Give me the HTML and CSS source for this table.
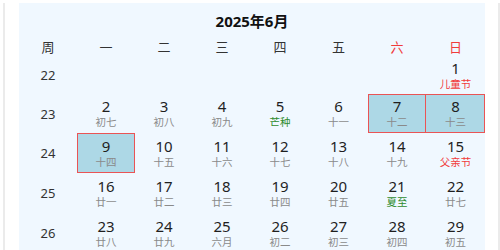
FILE: index.html
```html
<!DOCTYPE html>
<html lang="zh-CN">
<head>
<meta charset="utf-8">
<title>2025年6月</title>
<link rel="stylesheet" href="styles.css">
</head>
<body>
<div class="frame">
  <div class="calendar">
    <div class="cal-title">2025年6月</div>
    <table class="cal-grid">
      <colgroup>
        <col class="c-wk"><col class="c-day"><col class="c-day"><col class="c-day"><col class="c-day"><col class="c-wide"><col class="c-day"><col class="c-wide">
      </colgroup>
      <thead>
        <tr class="head-row">
          <th>周</th><th>一</th><th>二</th><th>三</th><th>四</th><th>五</th><th class="weekend">六</th><th class="weekend">日</th>
        </tr>
      </thead>
      <tbody>
        <tr class="week-short">
          <td class="wk">22</td>
          <td></td><td></td><td></td><td></td><td></td><td></td>
          <td><span class="num">1</span><span class="lunar fest">儿童节</span></td>
        </tr>
        <tr class="week-mid">
          <td class="wk">23</td>
          <td><span class="num">2</span><span class="lunar">初七</span></td>
          <td><span class="num">3</span><span class="lunar">初八</span></td>
          <td><span class="num">4</span><span class="lunar">初九</span></td>
          <td><span class="num">5</span><span class="lunar term">芒种</span></td>
          <td><span class="num">6</span><span class="lunar">十一</span></td>
          <td class="marked"><span class="num">7</span><span class="lunar">十二</span></td>
          <td class="marked joined"><span class="num">8</span><span class="lunar">十三</span></td>
        </tr>
        <tr>
          <td class="wk">24</td>
          <td class="marked"><span class="num">9</span><span class="lunar">十四</span></td>
          <td><span class="num">10</span><span class="lunar">十五</span></td>
          <td><span class="num">11</span><span class="lunar">十六</span></td>
          <td><span class="num">12</span><span class="lunar">十七</span></td>
          <td><span class="num">13</span><span class="lunar">十八</span></td>
          <td><span class="num">14</span><span class="lunar">十九</span></td>
          <td><span class="num">15</span><span class="lunar fest">父亲节</span></td>
        </tr>
        <tr>
          <td class="wk">25</td>
          <td><span class="num">16</span><span class="lunar">廿一</span></td>
          <td><span class="num">17</span><span class="lunar">廿二</span></td>
          <td><span class="num">18</span><span class="lunar">廿三</span></td>
          <td><span class="num">19</span><span class="lunar">廿四</span></td>
          <td><span class="num">20</span><span class="lunar">廿五</span></td>
          <td><span class="num">21</span><span class="lunar term">夏至</span></td>
          <td><span class="num">22</span><span class="lunar">廿七</span></td>
        </tr>
        <tr>
          <td class="wk">26</td>
          <td><span class="num">23</span><span class="lunar">廿八</span></td>
          <td><span class="num">24</span><span class="lunar">廿九</span></td>
          <td><span class="num">25</span><span class="lunar">六月</span></td>
          <td><span class="num">26</span><span class="lunar">初二</span></td>
          <td><span class="num">27</span><span class="lunar">初三</span></td>
          <td><span class="num">28</span><span class="lunar">初四</span></td>
          <td><span class="num">29</span><span class="lunar">初五</span></td>
        </tr>
      </tbody>
    </table>
  </div>
</div>
</body>
</html>
```

FILE: styles.css
```css
html, body {
  margin: 0;
  padding: 0;
  height: 100%;
  overflow: hidden;
  background: #ffffff;
}

body {
  font-family: "Noto Sans", "Noto Sans CJK SC", sans-serif;
  color: #222222;
}

.frame {
  margin-left: 3px;
  min-height: 100%;
  border-left: 2px solid #ebebeb;
  border-right: 2px solid #ebebeb;
}

.calendar {
  margin: 3px 0 0 14px;
  width: 466px;
  background: #f0f8ff;
  padding-top: 8px;
  padding-bottom: 20px;
}

.cal-title {
  text-align: center;
  font-size: 15px;
  font-weight: 700;
  line-height: 20px;
  margin-bottom: 5px;
  color: #111111;
}

.cal-grid {
  width: 466px;
  table-layout: fixed;
  border-collapse: separate;
  border-spacing: 0;
}

/* whole-pixel columns so the day outlines stay crisp */
.c-wk,
.c-day {
  width: 58px;
}

.c-wide {
  width: 59px;
}

.cal-grid th,
.cal-grid td {
  padding: 0;
  text-align: center;
  vertical-align: middle;
  border: none;
}

.head-row {
  height: 20px;
}

.cal-grid th {
  font-family: "Noto Sans CJK SC", sans-serif;
  font-weight: 400;
  font-size: 13px;
  color: #333333;
}

.cal-grid th.weekend {
  color: #f03c3c;
}

.cal-grid tbody tr {
  height: 40px;
}

.cal-grid tbody tr.week-short {
  height: 38px;
}

.cal-grid tbody tr.week-mid {
  height: 39px;
}

.cal-grid td.wk {
  font-size: 13px;
  color: #333333;
}

.num {
  display: block;
  font-size: 15px;
  line-height: 17px;
  color: #1f1f1f;
}

.lunar {
  display: block;
  font-family: "Noto Sans CJK SC", sans-serif;
  font-size: 10.5px;
  line-height: 14px;
  color: #8a8a8a;
}

.lunar.fest {
  color: #f03c3c;
}

.lunar.term {
  color: #2e8b2e;
}

/* highlighted days: filled cell with a red outline drawn inside it */
.cal-grid td.marked {
  background: #add8e6;
  box-shadow: inset 0 0 0 1px #ea5455;
}

/* a marked day right after another one shares its left edge */
.cal-grid td.marked.joined {
  box-shadow:
    inset 0 1px 0 0 #ea5455,
    inset -1px 0 0 0 #ea5455,
    inset 0 -1px 0 0 #ea5455;
}
```
